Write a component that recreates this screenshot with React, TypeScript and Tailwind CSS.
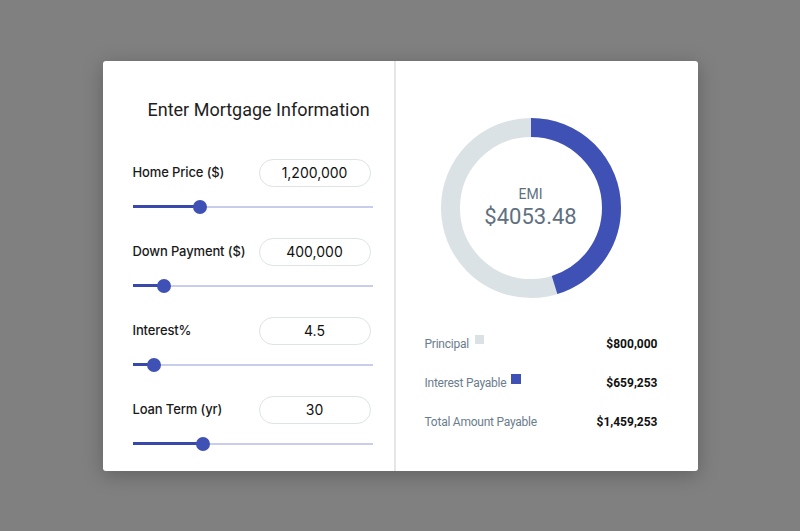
import React from "react";

// mortgage numbers
const fields = [
  { label: "Home Price ($)", value: "1,200,000", pct: 0.28 },
  { label: "Down Payment ($)", value: "400,000", pct: 0.13 },
  { label: "Interest%", value: "4.5", pct: 0.09 },
  { label: "Loan Term (yr)", value: "30", pct: 0.293 },
];

const principal = 800000;
const interest = 659253;
const total = principal + interest;

function Slider({ pct }: { pct: number }) {
  return (
    <div className="relative h-[14px] mt-[13px] pt-[6px]">
      <div className="h-[2px] bg-[#c9cdec]" />
      <div
        className="absolute left-0 top-[5px] h-[3px] bg-[#3949ab]"
        style={{ width: `${pct * 100}%` }}
      />
      <div
        className="absolute top-[0px] w-[14px] h-[14px] -ml-[7px] rounded-full bg-[#3f51b5]"
        style={{ left: `${pct * 100}%` }}
      />
    </div>
  );
}

function Donut() {
  const r = 80.5;
  const c = 2 * Math.PI * r;
  const frac = interest / total;
  return (
    <div className="relative w-[180px] h-[180px]">
      <svg width="180" height="180" viewBox="0 0 180 180">
        <circle cx="90" cy="90" r={r} fill="none" stroke="#dbe2e5" strokeWidth="19" />
        <circle
          cx="90"
          cy="90"
          r={r}
          fill="none"
          stroke="#3f51b5"
          strokeWidth="19"
          strokeDasharray={`${c * frac} ${c}`}
          transform="rotate(-90 90 90)"
        />
      </svg>
      <div className="absolute inset-0 flex flex-col items-center justify-center text-[#5f7080] font-['Roboto',sans-serif]">
        <div className="text-[14px] leading-[16px]">EMI</div>
        <div className="text-[22px] leading-[26px] mt-[2px]">$4053.48</div>
      </div>
    </div>
  );
}

export default function App() {
  return (
    <div className="h-[531px] w-full bg-[#808080] flex items-center justify-center">
      <div className="w-[595px] h-[410px] bg-white rounded-[3px] shadow-[0_4px_20px_rgba(0,0,0,0.25)] flex">
        {/* left: inputs */}
        <div className="w-[293px] pl-[30px] pr-[21px] pt-[37px] border-r-2 border-[#e6e6e6]">
          <h2 className="pl-[15px] text-[18px] leading-[24px] text-[#1e1e1e] font-['Roboto',sans-serif] mb-[37px]">
            Enter Mortgage Information
          </h2>
          <div className="flex flex-col gap-[24px]">
            {fields.map((f) => (
              <div key={f.label}>
                <div className="flex items-center justify-between h-[28px]">
                  <span className="text-[13px] font-medium text-[#1a1a1a] font-['Inter',sans-serif] tracking-[-0.01em]">
                    {f.label}
                  </span>
                  <div className="w-[112px] h-[28px] mr-[2px] rounded-full border border-[#dde3e6] flex items-center justify-center text-[14px] text-[#111] font-['Inter',sans-serif]">
                    {f.value}
                  </div>
                </div>
                <Slider pct={f.pct} />
              </div>
            ))}
          </div>
        </div>

        {/* right: chart + summary */}
        <div className="flex-1 pl-[29px] pr-[40px] pt-[57px]">
          <div className="ml-[16px]">
            <Donut />
          </div>
          <div className="mt-[38px] flex flex-col gap-[23px] font-['Roboto',sans-serif] text-[12px] leading-[16px]">
            <div className="flex justify-between items-center">
              <span className="text-[#6b7d8c] flex items-start tracking-[-0.02em]">
                Principal
                <span className="inline-block w-[9px] h-[9px] bg-[#dbe2e5] ml-[6px] -mt-[1px]" />
              </span>
              <span className="font-bold text-[#111]">$800,000</span>
            </div>
            <div className="flex justify-between items-center">
              <span className="text-[#6b7d8c] flex items-start tracking-[-0.02em]">
                Interest Payable
                <span className="inline-block w-[10px] h-[10px] bg-[#3f51b5] ml-[5px] -mt-[1px]" />
              </span>
              <span className="font-bold text-[#111]">$659,253</span>
            </div>
            <div className="flex justify-between items-center">
              <span className="text-[#6b7d8c] tracking-[-0.02em]">Total Amount Payable</span>
              <span className="font-bold text-[#111]">$1,459,253</span>
            </div>
          </div>
        </div>
      </div>
    </div>
  );
}
